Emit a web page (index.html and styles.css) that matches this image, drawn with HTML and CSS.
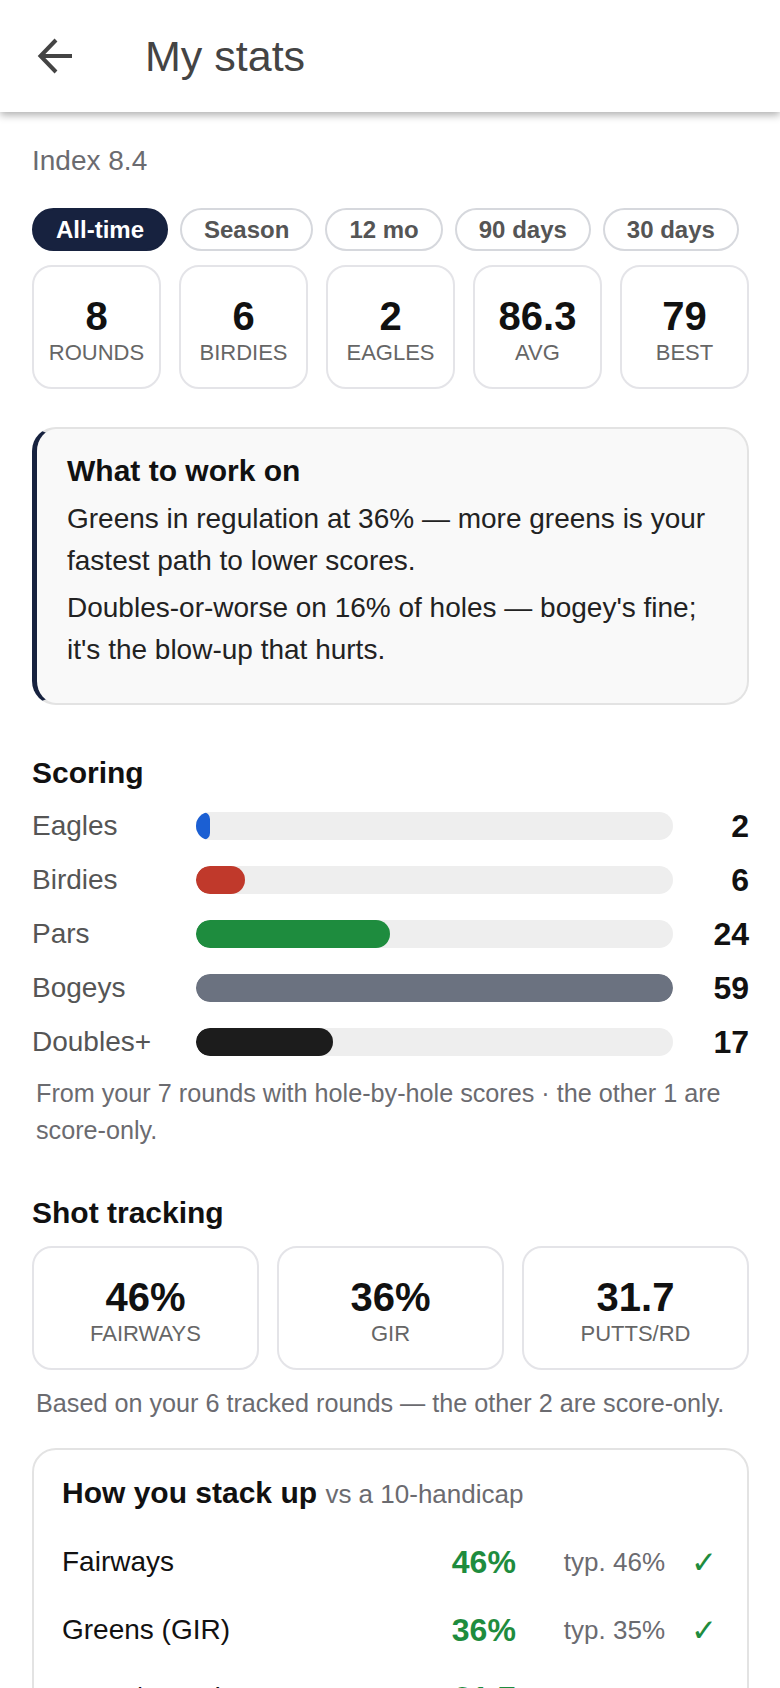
FILE: index.html
```html
<!DOCTYPE html>
<html lang="en">
<head>
<meta charset="utf-8">
<title>My stats</title>
<link rel="stylesheet" href="styles.css">
</head>
<body>
<header class="topbar">
  <button class="back" aria-label="Back">
    <svg width="44" height="44" viewBox="0 0 44 44" aria-hidden="true">
      <path d="M6.5 22H38M22 6L6.5 22L22 38" fill="none" stroke="#444" stroke-width="4" stroke-linejoin="miter"/>
    </svg>
  </button>
  <h1 class="title">My stats</h1>
</header>

<main class="page">
  <div class="index">Index 8.4</div>

  <nav class="pills">
    <span class="pill is-active">All-time</span>
    <span class="pill">Season</span>
    <span class="pill">12 mo</span>
    <span class="pill">90 days</span>
    <span class="pill">30 days</span>
  </nav>

  <div class="stats">
    <div class="tile"><div class="tile-num">8</div><div class="tile-label">Rounds</div></div>
    <div class="tile"><div class="tile-num">6</div><div class="tile-label">Birdies</div></div>
    <div class="tile"><div class="tile-num">2</div><div class="tile-label">Eagles</div></div>
    <div class="tile"><div class="tile-num">86.3</div><div class="tile-label">Avg</div></div>
    <div class="tile"><div class="tile-num">79</div><div class="tile-label">Best</div></div>
  </div>

  <section class="focus">
    <h3 class="focus-title">What to work on</h3>
    <p class="focus-text">Greens in regulation at 36% — more greens is your fastest path to lower scores.</p>
    <p class="focus-text">Doubles-or-worse on 16% of holes — bogey's fine; it's the blow-up that hurts.</p>
  </section>

  <h2 class="section-title">Scoring</h2>
  <div class="bars">
    <div class="bar-row">
      <span class="bar-label">Eagles</span>
      <span class="track"><span class="fill fill-eagle" style="width:3%"></span></span>
      <span class="bar-value">2</span>
    </div>
    <div class="bar-row">
      <span class="bar-label">Birdies</span>
      <span class="track"><span class="fill fill-birdie" style="width:10.2%"></span></span>
      <span class="bar-value">6</span>
    </div>
    <div class="bar-row">
      <span class="bar-label">Pars</span>
      <span class="track"><span class="fill fill-par" style="width:40.7%"></span></span>
      <span class="bar-value">24</span>
    </div>
    <div class="bar-row">
      <span class="bar-label">Bogeys</span>
      <span class="track"><span class="fill fill-bogey" style="width:100%"></span></span>
      <span class="bar-value">59</span>
    </div>
    <div class="bar-row">
      <span class="bar-label">Doubles+</span>
      <span class="track"><span class="fill fill-double" style="width:28.8%"></span></span>
      <span class="bar-value">17</span>
    </div>
  </div>
  <p class="note note-scoring">From your 7 rounds with hole-by-hole scores · the other 1 are score-only.</p>

  <h2 class="section-title section-shots">Shot tracking</h2>
  <div class="shots">
    <div class="tile"><div class="tile-num">46%</div><div class="tile-label">Fairways</div></div>
    <div class="tile"><div class="tile-num">36%</div><div class="tile-label">GIR</div></div>
    <div class="tile"><div class="tile-num">31.7</div><div class="tile-label">Putts/rd</div></div>
  </div>
  <p class="note note-shots">Based on your 6 tracked rounds — the other 2 are score-only.</p>

  <section class="compare">
    <h3 class="compare-title">How you stack up <span class="compare-sub">vs a 10-handicap</span></h3>
    <div class="compare-grid">
      <span class="cmp-label">Fairways</span>
      <span class="cmp-value">46%</span>
      <span class="cmp-typ">typ. 46%</span>
      <span class="cmp-check">✓</span>

      <span class="cmp-label">Greens (GIR)</span>
      <span class="cmp-value">36%</span>
      <span class="cmp-typ">typ. 35%</span>
      <span class="cmp-check">✓</span>

      <span class="cmp-label">Putts / round</span>
      <span class="cmp-value">31.7</span>
      <span class="cmp-typ">typ. 32</span>
      <span class="cmp-check">✓</span>
    </div>
  </section>
</main>
</body>
</html>
```

FILE: styles.css
```css
* {
  box-sizing: border-box;
}

html, body {
  margin: 0;
  padding: 0;
  background: #fff;
}

body {
  font-family: "Liberation Sans", Arial, Helvetica, sans-serif;
  color: #111;
}

/* ---------- top bar ---------- */
.topbar {
  position: relative;
  z-index: 2;
  height: 112px;
  display: flex;
  align-items: center;
  padding-left: 34px;
  background: #fff;
  box-shadow: 0 3px 8px rgba(0, 0, 0, 0.32);
}

.back {
  width: 44px;
  height: 44px;
  padding: 0;
  margin: 0;
  border: 0;
  background: none;
  display: block;
}

.back svg {
  display: block;
}

.title {
  margin: 0 0 0 67px;
  font-size: 43px;
  font-weight: 400;
  line-height: 50px;
  color: #444;
}

/* ---------- page body ---------- */
.page {
  padding: 0 31px 40px 32px;
}

.index {
  margin-top: 28px;
  font-size: 28px;
  line-height: 42px;
  color: #6b6b70;
}

.pills {
  margin-top: 26px;
  display: flex;
  gap: 12px;
}

.pill {
  display: block;
  padding: 5px 22px;
  border: 2px solid #d6d8dd;
  border-radius: 999px;
  font-size: 24px;
  font-weight: 700;
  line-height: 29px;
  color: #555;
  background: #fff;
  white-space: nowrap;
}

.pill.is-active {
  background: #17223f;
  border-color: #17223f;
  color: #fff;
}

/* stat tiles */
.stats {
  margin-top: 14px;
  display: grid;
  grid-template-columns: repeat(5, 1fr);
  gap: 18px;
}

.shots {
  margin-top: 15px;
  display: grid;
  grid-template-columns: repeat(3, 1fr);
  gap: 18px;
}

.tile {
  border: 2px solid #e4e4e8;
  border-radius: 20px;
  padding: 27px 4px 21px;
  text-align: center;
  background: #fff;
}

.tile-num {
  font-size: 40px;
  font-weight: 700;
  line-height: 44px;
  color: #111;
}

.tile-label {
  margin-top: 2px;
  font-size: 22px;
  line-height: 26px;
  color: #666;
  text-transform: uppercase;
}

/* focus card */
.focus {
  margin-top: 38px;
  border: 2px solid #e3e3e3;
  border-left: 5px solid #17223f;
  border-radius: 24px;
  background: #f9f9f9;
  padding: 24px 28px 32px 30px;
}

.focus-title {
  margin: 0;
  font-size: 30px;
  font-weight: 700;
  line-height: 36px;
  color: #111;
}

.focus-text {
  margin: 5px 0 0;
  font-size: 28px;
  line-height: 42px;
  color: #222;
}

.focus-title + .focus-text {
  margin-top: 9px;
}

/* section headings */
.section-title {
  margin: 50px 0 0;
  font-size: 30px;
  font-weight: 700;
  line-height: 36px;
  color: #111;
}

.section-title.section-shots {
  margin-top: 46px;
}

/* scoring bars */
.bars {
  margin-top: 14px;
  display: flex;
  flex-direction: column;
  gap: 12px;
}

.bar-row {
  display: grid;
  grid-template-columns: 164px 1fr 76px;
  align-items: center;
  height: 42px;
}

.bar-label {
  font-size: 28px;
  line-height: 42px;
  color: #555;
}

.track {
  display: block;
  height: 28px;
  border-radius: 14px;
  background: #eee;
  overflow: hidden;
}

.fill {
  display: block;
  height: 100%;
  border-radius: 14px;
}

.fill-eagle { background: #1b5fd3; }
.fill-birdie { background: #c0392b; }
.fill-par { background: #1e8c3e; }
.fill-bogey { background: #6b7280; }
.fill-double { background: #1c1c1c; }

.bar-value {
  text-align: right;
  font-size: 32px;
  font-weight: 700;
  line-height: 42px;
  color: #111;
}

/* footnotes */
.note {
  margin: 12px 0 0;
  padding-left: 4px;
  font-size: 25.2px;
  line-height: 37px;
  color: #6b6b70;
}

.note.note-shots {
  margin-top: 15px;
}

/* comparison card */
.compare {
  margin-top: 26px;
  border: 2px solid #e3e3e3;
  border-radius: 24px;
  padding: 25px 30px 30px 28px;
  background: #fff;
}

.compare-title {
  margin: 0;
  font-size: 30px;
  font-weight: 700;
  line-height: 36px;
  color: #111;
}

.compare-sub {
  font-size: 26px;
  font-weight: 400;
  color: #6b6b70;
}

.compare-grid {
  margin-top: 29px;
  display: grid;
  grid-template-columns: 1fr auto auto auto;
  grid-auto-rows: 42px;
  row-gap: 26px;
  align-items: center;
}

.cmp-label {
  font-size: 28px;
  line-height: 42px;
  color: #111;
}

.cmp-value {
  text-align: right;
  font-size: 32px;
  font-weight: 700;
  line-height: 42px;
  color: #1e8c3e;
}

.cmp-typ {
  margin-left: 48px;
  font-size: 26px;
  line-height: 42px;
  color: #6b6b70;
}

.cmp-check {
  margin-left: 26px;
  font-family: "DejaVu Sans", sans-serif;
  font-size: 31px;
  line-height: 42px;
  color: #1e8c3e;
}
```
